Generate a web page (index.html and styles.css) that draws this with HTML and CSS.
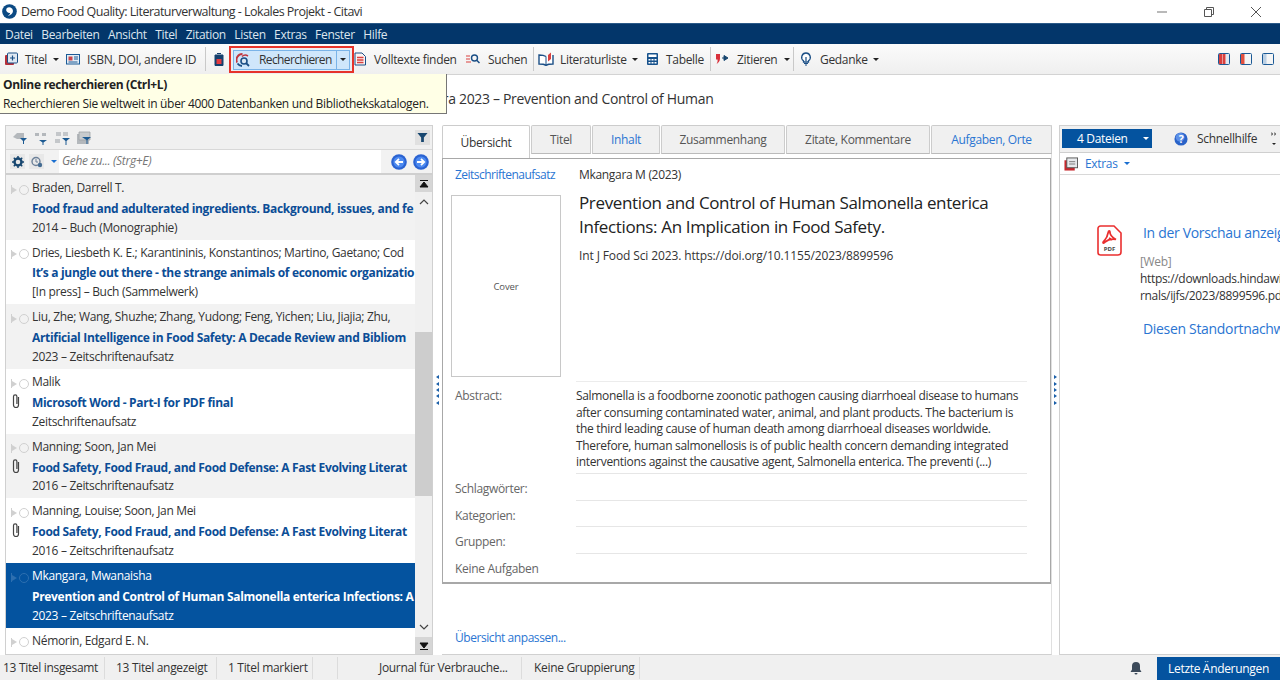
FILE: index.html
```html
<!DOCTYPE html>
<html lang="de">
<head>
<meta charset="utf-8">
<title>Demo Food Quality: Literaturverwaltung - Lokales Projekt - Citavi</title>
<link rel="stylesheet" href="styles.css">
</head>
<body>
<div class="app">
  <header class="titlebar">
    <svg class="logo" viewBox="0 0 16 16"><circle cx="8" cy="8" r="7.800" fill="#0b4a84"/><path d="M4.800 4.800a3.900 3.900 0 0 1 6.900 2.400c0 2.900-2.700 5-5.600 5.600 1.500-1.100 2.500-2.200 2.600-3.500a3.200 3.200 0 0 1-3.900-4.500z" fill="#fff"/></svg>
    <span class="app-title">Demo Food Quality: Literaturverwaltung - Lokales Projekt - Citavi</span>
    <div class="winbtns">
      <svg viewBox="0 0 12 12"><path d="M1 6h10" stroke="#8a8a8a" stroke-width="1.200"/></svg>
      <svg viewBox="0 0 12 12"><path d="M1.500 3.500h7v7h-7zM3.500 3.500v-2h7v7h-2" fill="none" stroke="#555" stroke-width="1"/></svg>
      <svg viewBox="0 0 12 12"><path d="M1 1l10 10M11 1L1 11" stroke="#555" stroke-width="1"/></svg>
    </div>
  </header>
  <nav class="menubar">
    <span>Datei</span><span>Bearbeiten</span><span>Ansicht</span><span>Titel</span><span>Zitation</span><span>Listen</span><span>Extras</span><span>Fenster</span><span>Hilfe</span>
  </nav>
  <div class="toolbar">
    <div class="tool t1">
      <svg class="ic" viewBox="0 0 14 14"><rect x="1" y="3" width="9" height="10" rx="1" fill="#b5303a"/><rect x="3.500" y="1" width="10" height="10" rx="1" fill="#dfe8f2" stroke="#1b4f86"/><path d="M8.500 3.500v5M6 6h5" stroke="#1b4f86" stroke-width="1.200"/></svg>
      <span>Titel</span><i class="caret"></i>
    </div>
    <div class="tool t2">
      <svg class="ic" viewBox="0 0 14 14"><rect x=".5" y="2.500" width="13" height="9.500" fill="#e3ecf5" stroke="#1b5a96"/><rect x="2.500" y="4.500" width="4" height="4" fill="#c9444a"/><path d="M8 5h4M8 7h4M2.500 10h9" stroke="#1b5a96"/></svg>
      <span>ISBN, DOI, andere ID</span>
    </div>
    <i class="sep"></i>
    <div class="tool t3">
      <svg class="ic-s" viewBox="0 0 10 14"><path d="M3 1.500h4M1 3h8v10.500H1z" fill="#16406e" stroke="#16406e"/><rect x="2.500" y="7" width="5" height="5" fill="#e53a3f"/></svg>
    </div>
    <div class="highlight">
      <div class="split">
        <svg class="ic" viewBox="0 0 14 14"><path d="M6.500 1A6 6 0 0 0 1 9.500" fill="none" stroke="#c0353d" stroke-width="2"/><path d="M1.500 10.500A6 6 0 0 0 6 13" fill="none" stroke="#1b4f86" stroke-width="1.800"/><path d="M6 3.500a5 5 0 0 1 6-.5" fill="none" stroke="#c0353d" stroke-width="1.500"/><circle cx="8" cy="8" r="3" fill="#dbe7f2" stroke="#1b4f86" stroke-width="1.600"/><path d="M10 10l3 3" stroke="#1b4f86" stroke-width="1.800"/></svg>
        <span class="split-label">Recherchieren</span>
        <span class="split-drop"><i class="caret"></i></span>
      </div>
    </div>
    <div class="tool t4">
      <svg class="ic" viewBox="0 0 14 14"><path d="M1 1h7l3.500 3.500V13H1z" fill="#fdf3f2" stroke="#1b4f86"/><path d="M3 5.500h6.500M3 8h6.500M3 10.500h6.500" stroke="#d9403f" stroke-width="1.300"/></svg>
      <span>Volltexte finden</span>
    </div>
    <div class="tool t5">
      <svg class="ic" viewBox="0 0 14 14"><path d="M0 4h4M0 7h4M0 10h5" stroke="#d9403f" stroke-width="1.200"/><circle cx="8.500" cy="6" r="3" fill="none" stroke="#1b4f86" stroke-width="1.400"/><path d="M10.500 8l3 3" stroke="#1b4f86" stroke-width="1.500"/></svg>
      <span>Suchen</span>
    </div>
    <i class="sep"></i>
    <div class="tool t6">
      <svg class="ic-w" viewBox="0 0 16 14"><path d="M8 4.500C6.500 3.500 3.500 3 1 3v9c2.500 0 5.500.3 7 1.300 1.500-1 4.500-1.300 7-1.300V3" fill="#fff" stroke="#1b4f86" stroke-width="1.400"/><path d="M8 4.500v8.500" stroke="#1b4f86"/><path d="M10 9.500V3l3-2.500V7z" fill="#d9403f"/></svg>
      <span>Literaturliste</span><i class="caret"></i>
    </div>
    <div class="tool t7">
      <svg class="ic" viewBox="0 0 14 14"><rect x="1" y="1" width="11" height="12" rx="1" fill="#17528c"/><rect x="2.500" y="2.500" width="8" height="2.500" fill="#fff"/><path d="M2.500 7h2v1.500h-2zM5.500 7h2v1.500h-2zM8.500 7h2v1.500h-2zM2.500 10h2v1.500h-2zM5.500 10h2v1.500h-2zM8.500 10h2v1.500h-2z" fill="#fff"/></svg>
      <span>Tabelle</span>
    </div>
    <i class="sep"></i>
    <div class="tool t8">
      <svg class="ic" viewBox="0 0 14 14"><path d="M1 2h4v4.500c0 2.500-1.500 4.500-3.500 5.500 1-1.500 1.300-3 1-4.500H1z" fill="#d9303a"/><path d="M7 6h3M9 3.500L13 6l-4 2.500z" fill="#17466f" stroke="#17466f"/></svg>
      <span>Zitieren</span><i class="caret"></i>
    </div>
    <i class="sep"></i>
    <div class="tool t9">
      <svg class="ic" viewBox="0 0 14 14"><path d="M6 1a4.300 4.300 0 0 0-2.500 7.800V10h5V8.800A4.300 4.300 0 0 0 6 1z" fill="#fff" stroke="#1b4f86" stroke-width="1.300"/><path d="M6 5v4M4 11.500h4M5 13h2" stroke="#1b4f86" stroke-width="1.200"/></svg>
      <span>Gedanke</span><i class="caret"></i>
    </div>
    <div class="layout-btns">
      <svg viewBox="0 0 12 12"><rect x="1" y="1" width="3" height="10" fill="#d9403f"/><rect x="4.500" y="1" width="3" height="10" fill="#d9403f"/><rect x="8" y="1" width="3" height="10" fill="#dfe8f2"/><rect x=".5" y=".5" width="11" height="11" rx="1" fill="none" stroke="#1b5a96"/></svg>
      <svg viewBox="0 0 12 12"><rect x="1" y="1" width="3.500" height="10" fill="#e2503f"/><rect x=".5" y=".5" width="11" height="11" rx="1" fill="none" stroke="#1b5a96"/></svg>
      <svg viewBox="0 0 12 12"><rect x="1" y="1" width="3.500" height="10" fill="#bcd0e4"/><rect x=".5" y=".5" width="11" height="11" rx="1" fill="none" stroke="#1b5a96"/></svg>
    </div>
  </div>
  <div class="tooltip">
    <strong>Online recherchieren (Ctrl+L)</strong>
    <span>Recherchieren Sie weltweit in über 4000 Datenbanken und Bibliothekskatalogen.</span>
  </div>
  <div class="doc-heading">Mkangara 2023 – Prevention and Control of Human</div>
  <main class="panes">
    <section class="left">
      <div class="left-tools">
        <svg viewBox="0 0 16 14"><path d="M1 6l4-4h7v6H5z" fill="#b4b8bc"/><path d="M8 7h7l-3 3v3h-1v-3z" fill="#1c5a92"/></svg>
        <svg viewBox="0 0 16 14"><path d="M2 2h4v3H2zM9 2h4v3H9z" fill="#b4b8bc"/><path d="M6 9h8l-3.500 2.500V14h-1v-2.500z" fill="#1c5a92"/></svg>
        <svg viewBox="0 0 16 14"><path d="M1 8h5v4H1zM2 1h5v4H2zM9 1h5v4H9z" fill="#c4c7ca"/><path d="M8 7h8l-3.500 3v4h-1v-4z" fill="#1c5a92"/></svg>
        <svg viewBox="0 0 16 14"><path d="M2 3h12v10H2z" fill="#b4b8bc"/><path d="M4 1h11v8H4z" fill="#c8cbce" stroke="#9ea2a6" stroke-width=".8"/><path d="M7 6h9l-3.500 3v4h-1V9z" fill="#1c5a92"/></svg>
        <span class="filter-btn"><svg viewBox="0 0 12 12"><path d="M.5 1h11L7.500 6v5h-3V6z" fill="#17466f"/></svg></span>
      </div>
      <div class="left-search">
        <span class="mini-btn"><svg viewBox="0 0 12 12"><circle cx="6" cy="6" r="3.500" fill="none" stroke="#17466f" stroke-width="2.400"/><path d="M6 0v2M6 10v2M0 6h2M10 6h2M1.800 1.800l1.400 1.400M8.800 8.800l1.400 1.400M10.200 1.800L8.800 3.200M3.200 8.800l-1.400 1.400" stroke="#17466f" stroke-width="1.500"/></svg></span>
        <span class="mini-btn"><svg viewBox="0 0 12 12"><circle cx="5" cy="5.500" r="4" fill="none" stroke="#6d8199" stroke-width="1.400"/><circle cx="9" cy="9" r="2.200" fill="#456c92"/><path d="M5 3v3h2" fill="none" stroke="#6d8199"/></svg></span>
        <i class="caret blue"></i>
        <span class="search-text">Gehe zu... (Strg+E)</span>
        <svg class="nav" viewBox="0 0 16 16"><circle cx="8" cy="8" r="7.800" fill="#2a63d2"/><circle cx="8" cy="8" r="5.600" fill="#4d8af0"/><path d="M12 8H5M8 4.800L4.800 8 8 11.200" fill="none" stroke="#fff" stroke-width="1.800"/></svg>
        <svg class="nav" viewBox="0 0 16 16"><circle cx="8" cy="8" r="7.800" fill="#2a63d2"/><circle cx="8" cy="8" r="5.600" fill="#4d8af0"/><path d="M4 8h7M8 4.800L11.200 8 8 11.200" fill="none" stroke="#fff" stroke-width="1.800"/></svg>
      </div>
      <div class="list-wrap">
        <ul class="list">
          <li class="row alt"><div class="marks"><i class="flag"></i></div><div class="lines"><p>Braden, Darrell T.</p><p class="t">Food fraud and adulterated ingredients. Background, issues, and fe</p><p>2014 – Buch (Monographie)</p></div></li>
          <li class="row"><div class="marks"><i class="flag"></i></div><div class="lines"><p>Dries, Liesbeth K. E.; Karantininis, Konstantinos; Martino, Gaetano; Cod</p><p class="t">It’s a jungle out there - the strange animals of economic organizatio</p><p>[In press] – Buch (Sammelwerk)</p></div></li>
          <li class="row alt"><div class="marks"><i class="flag"></i></div><div class="lines"><p>Liu, Zhe; Wang, Shuzhe; Zhang, Yudong; Feng, Yichen; Liu, Jiajia; Zhu,</p><p class="t">Artificial Intelligence in Food Safety: A Decade Review and Bibliom</p><p>2023 – Zeitschriftenaufsatz</p></div></li>
          <li class="row"><div class="marks"><i class="flag"></i><svg class="clip" viewBox="0 0 10 16"><path d="M7.500 4v8a2.500 2.500 0 0 1-5 0V3.500a1.700 1.700 0 0 1 3.400 0V11" fill="none" stroke="#444" stroke-width="1.200"/></svg></div><div class="lines"><p>Malik</p><p class="t">Microsoft Word - Part-I for PDF final</p><p>Zeitschriftenaufsatz</p></div></li>
          <li class="row alt"><div class="marks"><i class="flag"></i><svg class="clip" viewBox="0 0 10 16"><path d="M7.500 4v8a2.500 2.500 0 0 1-5 0V3.500a1.700 1.700 0 0 1 3.400 0V11" fill="none" stroke="#444" stroke-width="1.200"/></svg></div><div class="lines"><p>Manning; Soon, Jan Mei</p><p class="t">Food Safety, Food Fraud, and Food Defense: A Fast Evolving Literat</p><p>2016 – Zeitschriftenaufsatz</p></div></li>
          <li class="row"><div class="marks"><i class="flag"></i><svg class="clip" viewBox="0 0 10 16"><path d="M7.500 4v8a2.500 2.500 0 0 1-5 0V3.500a1.700 1.700 0 0 1 3.400 0V11" fill="none" stroke="#444" stroke-width="1.200"/></svg></div><div class="lines"><p>Manning, Louise; Soon, Jan Mei</p><p class="t">Food Safety, Food Fraud, and Food Defense: A Fast Evolving Literat</p><p>2016 – Zeitschriftenaufsatz</p></div></li>
          <li class="row sel"><div class="marks"><i class="flag"></i></div><div class="lines"><p>Mkangara, Mwanaisha</p><p class="t">Prevention and Control of Human Salmonella enterica Infections: A</p><p>2023 – Zeitschriftenaufsatz</p></div></li>
          <li class="row"><div class="marks"><i class="flag"></i></div><div class="lines"><p>Némorin, Edgard E. N.</p></div></li>
        </ul>
        <div class="scroll">
          <span class="sb-end"><svg viewBox="0 0 10 8"><path d="M1 .5h8M5 2l4 5H1z" stroke="#111" fill="#111"/></svg></span>
          <svg class="sb-arrow" viewBox="0 0 10 6"><path d="M1 5l4-4 4 4" fill="none" stroke="#444" stroke-width="1.200"/></svg>
          <span class="sb-space top"></span>
          <span class="sb-thumb"></span>
          <span class="sb-space"></span>
          <svg class="sb-arrow" viewBox="0 0 10 6"><path d="M1 1l4 4 4-4" fill="none" stroke="#444" stroke-width="1.200"/></svg>
          <span class="sb-end"><svg viewBox="0 0 10 8"><path d="M1 7.500h8M5 6L9 1H1z" stroke="#111" fill="#111"/></svg></span>
        </div>
      </div>
    </section>
    <div class="splitter"><i></i><i></i><i></i><i></i><i></i></div>
    <section class="center">
      <div class="tabs">
        <span class="tab active w1">Übersicht</span>
        <span class="tab w2">Titel</span>
        <span class="tab link w3">Inhalt</span>
        <span class="tab w4">Zusammenhang</span>
        <span class="tab w5">Zitate, Kommentare</span>
        <span class="tab link w6">Aufgaben, Orte</span>
      </div>
      <div class="card">
        <div class="top-grid">
          <a class="type">Zeitschriftenaufsatz</a>
          <span class="author">Mkangara M (2023)</span>
          <div class="cover">Cover</div>
          <div class="ref">
            <h1>Prevention and Control of Human Salmonella enterica Infections: An Implication in Food Safety.</h1>
            <p>Int J Food Sci 2023. https://doi.org/10.1155/2023/8899596</p>
          </div>
        </div>
        <dl class="fields">
          <dt class="abs">Abstract:</dt>
          <dd class="abs">Salmonella is a foodborne zoonotic pathogen causing diarrhoeal disease to humans after consuming contaminated water, animal, and plant products. The bacterium is the third leading cause of human death among diarrhoeal diseases worldwide. Therefore, human salmonellosis is of public health concern demanding integrated interventions against the causative agent, Salmonella enterica. The preventi (...)</dd>
          <dt>Schlagwörter:</dt><dd></dd>
          <dt>Kategorien:</dt><dd></dd>
          <dt>Gruppen:</dt><dd></dd>
          <dt>Keine Aufgaben</dt><dd class="last"></dd>
        </dl>
      </div>
      <a class="customize">Übersicht anpassen...</a>
    </section>
    <div class="splitter right-s"><i></i><i></i><i></i><i></i><i></i></div>
    <aside class="right">
      <div class="right-tabs">
        <span class="files-btn">4 Dateien<i class="caret white"></i></span>
        <svg class="help" viewBox="0 0 16 16"><circle cx="8" cy="8" r="7.500" fill="#2a63c8"/><circle cx="7" cy="6" r="5" fill="#5c8fe8"/><text x="8" y="12" text-anchor="middle" class="help-q">?</text></svg>
        <span class="help-text">Schnellhilfe</span>
        <span class="more">
          <svg viewBox="0 0 6 4"><path d="M.5 0v4L2 2zM3.500 0v4L5 2z" fill="#333"/></svg>
          <i class="caret tiny"></i>
        </span>
      </div>
      <div class="extras">
        <svg class="ic-w" viewBox="0 0 16 15"><rect x="1" y="3.500" width="11" height="11" fill="#c8282d"/><rect x="3.500" y="1" width="11.500" height="10.500" fill="#e7e9ec" stroke="#555"/><path d="M6 5h6.500M6 7.500h6.500" stroke="#777"/></svg>
        <a>Extras</a><i class="caret blue"></i>
      </div>
      <div class="files">
        <svg class="pdf" viewBox="0 0 25 31"><path d="M3.500 1H17l7 7v19a3 3 0 0 1-3 3H3.500A2.500 2.500 0 0 1 1 27.500v-24A2.500 2.500 0 0 1 3.500 1z" fill="#fff" stroke="#ea2f2f" stroke-width="1.600"/><path d="M12 6c-1.500 0 0 4.500-4.500 9.500C5 18 6 18.800 8 17c3-2.500 7-3.500 11-2.500-3-1.500-6-3.500-6.200-8C12.700 6 12.300 6 12 6zM12 13l3.500 2" fill="none" stroke="#ea2f2f" stroke-width="1.800"/><text x="12.500" y="26" text-anchor="middle" class="pdf-t">PDF</text></svg>
        <div class="file-info">
          <a class="big first">In der Vorschau anzeigen</a>
          <span class="web">[Web]</span>
          <span class="url">https://downloads.hindawi.com/jou</span>
          <span class="url">rnals/ijfs/2023/8899596.pdf</span>
          <a class="big second">Diesen Standortnachweis</a>
        </div>
      </div>
    </aside>
  </main>
  <footer class="status">
    <span class="s s1">13 Titel insgesamt</span>
    <span class="s s2">13 Titel angezeigt</span>
    <span class="s s3">1 Titel markiert</span>
    <span class="s s4"></span>
    <span class="s s5">Journal für Verbrauche...</span>
    <span class="s s6">Keine Gruppierung</span>
    <svg class="bell" viewBox="0 0 14 14"><path d="M7 1a4 4 0 0 0-4 4v3.500L1.500 11h11L11 8.500V5a4 4 0 0 0-4-4zM5.500 12a1.500 1.500 0 0 0 3 0z" fill="#3c4a5a"/></svg>
    <span class="changes">Letzte Änderungen</span>
  </footer>
</div>
</body>
</html>
```
FILE: styles.css
```css
* { box-sizing: border-box; }
html, body { margin: 0; padding: 0; height: 100%; overflow: hidden; }
body { font-family: "Open Sans", "Noto Sans", sans-serif; font-size: 12px; color: #222; background: #fff; letter-spacing: -.32px; }
p, ul, dl, dd, dt, h1 { margin: 0; padding: 0; }
i { display: block; font-style: normal; }
.app { position: relative; width: 1280px; height: 680px; display: flex; flex-direction: column; overflow: hidden; }

.titlebar { height: 23px; display: flex; align-items: center; padding-left: 2px; background: #fff; flex: none; }
.logo { width: 15px; height: 15px; flex: none; }
.app-title { margin-left: 4px; font-size: 12.500px; color: #333; letter-spacing: -.52px; }
.winbtns { margin-left: auto; display: flex; gap: 35px; padding-right: 18px; }
.winbtns svg { width: 12px; height: 12px; }

.menubar { height: 21px; flex: none; background: #03366a; border-top: 1px solid #2b5a88; color: #dde6ef; display: flex; align-items: center; padding-left: 5px; gap: 8.400px; }

.toolbar { height: 31px; flex: none; display: flex; align-items: center; padding-left: 4px; background: linear-gradient(#fbfbfb, #efefef); border-bottom: 1px solid #d3d3d3; }
.tool { display: flex; align-items: center; gap: 8px; color: #333; flex: none; }
.ic { width: 14px; height: 14px; flex: none; }
.ic-s { width: 10px; height: 14px; flex: none; }
.ic-w { width: 16px; height: 14px; flex: none; }
.caret { width: 0; height: 0; border: 3px solid transparent; border-top: 3px solid #222; border-bottom: 0; margin-left: -1px; flex: none; }
.caret.blue { border-top-color: #1a6fd0; }
.caret.white { border-top-color: #fff; margin-left: 0; }
.caret.tiny { margin: 0; border-width: 2.500px; border-bottom: 0; }
.sep { width: 1px; height: 24px; background: #c9c9c9; flex: none; }
.t1 { width: 62px; gap: 7px; }
.t2 { width: 139px; gap: 7px; }
.t3 { width: 16px; margin-left: 8px; }
.highlight { width: 125px; height: 27px; border: 2px solid #e6332a; display: flex; align-items: center; justify-content: center; flex: none; margin-top: 2px; background: #eaeef2; align-self: flex-start; margin-left: -1px; }
.split { width: 117px; height: 20px; background: #cfe6fb; border: 1px solid #7ab3e8; display: flex; align-items: center; padding-left: 2px; color: #333; }
.split-label { margin-left: 9px; letter-spacing: -.62px; }
.split-drop { margin-left: auto; width: 13px; height: 18px; border-left: 1px solid #7ab3e8; display: flex; align-items: center; justify-content: center; }
.split-drop .caret { margin: 0; }
.t4 { width: 112px; gap: 6px; }
.t5 { width: 67px; gap: 8px; }
.t6 { width: 108px; margin-left: 4px; gap: 6px; }
.t7 { width: 64px; gap: 6px; }
.t8 { width: 78px; margin-left: 4px; gap: 8px; }
.t9 { width: 90px; margin-left: 6px; gap: 6px; }
.layout-btns { margin-left: auto; display: flex; gap: 10px; padding-right: 6px; }
.layout-btns svg { width: 12px; height: 12px; }

.tooltip { position: absolute; left: 0; top: 74px; width: 447px; height: 40px; background: #ffffe6; border-right: 1px solid #767676; border-bottom: 1px solid #767676; padding: 3px 3px; display: flex; flex-direction: column; gap: 3px; color: #222; line-height: 16px; z-index: 5; }
.tooltip strong { font-weight: 700; letter-spacing: -.35px; }

.doc-heading { height: 50px; flex: none; padding: 14px 0 0 393px; font-size: 14px; letter-spacing: -.32px; color: #333; line-height: 20px; white-space: nowrap; }

.panes { height: 530px; flex: none; display: flex; padding-left: 5px; }
.left { width: 428px; flex: none; border: 1px solid #d0d0d0; border-right-width: 1px; display: flex; flex-direction: column; }
.left-tools { height: 23px; flex: none; background: #f0f0f0; display: flex; align-items: center; padding-left: 6px; gap: 5px; }
.left-tools > svg { width: 16px; height: 14px; }
.filter-btn { margin-left: auto; margin-right: 2px; width: 15px; height: 15px; background: #e0e0e0; display: flex; align-items: center; justify-content: center; }
.filter-btn svg { width: 11px; height: 11px; }
.left-search { height: 26px; flex: none; display: flex; align-items: center; border-top: 1px solid #d8d8d8; border-bottom: 2px solid #cfcfcf; background: #f2f2f2; padding: 0 3px 0 4px; }
.mini-btn { width: 15px; height: 15px; background: #e8e8e8; display: flex; align-items: center; justify-content: center; margin-right: 4px; }
.mini-btn svg { width: 12px; height: 12px; }
.left-search .caret { margin: 0 2px 0 3px; }
.search-text { flex: 1; align-self: stretch; background: #fff; padding-left: 3px; font-style: italic; color: #777; line-height: 22px; margin-right: 4px; }
.nav { width: 16px; height: 16px; margin-left: 6px; flex: none; }
.list-wrap { flex: 1; min-height: 0; display: flex; }
.list { list-style: none; flex: 1; min-width: 0; overflow: hidden; }
.row { height: 64.700px; display: flex; background: #fff; color: #333; overflow: hidden; }
.row.alt { background: #f2f2f2; }
.row.sel { background: #04539f; color: #fff; }
.marks { width: 26px; flex: none; padding: 10px 0 0 5px; display: flex; flex-direction: column; align-items: flex-start; }
.flag { height: 9px; flex: none; display: flex; align-items: center; border-left: 1.500px solid #d0d0d0; }
.flag::before { content: ""; width: 0; height: 0; border-top: 3.500px solid transparent; border-bottom: 3.500px solid transparent; border-left: 5px solid #d0d0d0; }
.flag::after { content: ""; width: 8px; height: 8px; margin-left: 2px; border: 1.500px solid #d0d0d0; border-radius: 50%; }
.sel .flag { border-left-color: #2d6fb0; }
.sel .flag::before { border-left-color: #2d6fb0; }
.sel .flag::after { border-color: #2d6fb0; }
.clip { width: 10px; height: 16px; margin-top: 5px; flex: none; }
.lines { flex: 1; min-width: 0; padding-top: 3px; }
.lines p { height: 19.800px; line-height: 19.800px; white-space: nowrap; overflow: hidden; }
.lines p.t { font-weight: 700; color: #0b4d96; letter-spacing: -.32px; line-height: 21px; }
.sel .lines p.t { color: #fff; }
.scroll { width: 17px; flex: none; background: #f0f0f0; display: flex; flex-direction: column; align-items: center; }
.sb-end { width: 17px; height: 17px; background: #d6d6d6; display: flex; align-items: center; justify-content: center; flex: none; }
.sb-end svg { width: 10px; height: 8px; }
.sb-arrow { width: 10px; height: 6px; margin: 7px 0; flex: none; }
.sb-space { flex: 1; }
.sb-space.top { flex: 0 0 120px; }
.sb-thumb { width: 17px; height: 164px; background: #cdcdcd; flex: none; }

.splitter { width: 9px; flex: none; display: flex; flex-direction: column; align-items: center; justify-content: center; gap: 2.400px; }
.splitter i { width: 0; height: 0; border: 2.500px solid transparent; border-right: 3.500px solid #1a5ea8; border-left: 0; }
.right-s { width: 7px; }
.right-s i { border-left: 3.500px solid #1a5ea8; border-right: 0; }

.center { width: 610px; flex: none; display: flex; flex-direction: column; border-bottom: 1px solid #d0d0d0; border-right: 1px solid #e0e0e0; }
.tabs { height: 29px; display: flex; flex: none; gap: 1px; }
.tab { height: 29px; background: #f0f0f0; border: 1px solid #ccc; border-bottom: 1px solid #bbb; display: flex; align-items: center; justify-content: center; color: #555; border-radius: 2px 2px 0 0; flex: none; }
.tab.active { background: #fff; color: #333; border-bottom: 0; height: 33px; z-index: 1; }
.tab.link { color: #2a75d2; }
.w1 { width: 88px; } .w2 { width: 60px; } .w3 { width: 68px; } .w4 { width: 124px; } .w5 { width: 144px; } .w6 { width: 121px; }
.card { margin-top: 4px; height: 426px; border: 1px solid #a8a8a8; border-width: 1px 1px 2px 1px; display: flex; flex-direction: column; padding: 0 23px 0 8px; flex: none; }
.top-grid { display: grid; grid-template-columns: 128px 1fr; grid-template-rows: 36px 186px; }
.type { color: #2a75d2; padding: 7px 0 0 4px; line-height: 18px; letter-spacing: -.52px; }
.author { padding-top: 7px; line-height: 18px; color: #333; }
.cover { width: 110px; height: 182px; border: 1px solid #c8c8c8; display: flex; align-items: center; justify-content: center; font-size: 9.500px; color: #555; letter-spacing: -.1px; }
.ref h1 { font-weight: 400; font-size: 17px; line-height: 24px; color: #222; letter-spacing: -.36px; margin-top: -4px; width: 440px; }
.ref p { margin-top: 9px; line-height: 16px; color: #333; letter-spacing: -.12px; }
.fields { display: grid; grid-template-columns: 125px 1fr; margin-top: 0; }
.fields dt { padding: 2px 0 0 4px; color: #666; line-height: 26.700px; height: 26.700px; }
.fields dd { border-bottom: 1px solid #e6e6e6; height: 26.700px; }
.fields dt.abs { height: 93px; line-height: 16.600px; padding-top: 7px; }
.fields dd.abs { height: 93px; line-height: 16.600px; padding-top: 6px; color: #333; border-top: 1px solid #ececec; }
.fields dd.last { border-bottom: 0; }
.customize { color: #2a75d2; padding: 45px 0 0 13px; line-height: 18px; letter-spacing: -.44px; }

.right { flex: 1; min-width: 0; border: 1px solid #d0d0d0; border-right: 0; display: flex; flex-direction: column; overflow: hidden; }
.right-tabs { height: 27px; flex: none; background: #f0f0f0; display: flex; align-items: center; padding: 0 0 1px 2px; border-bottom: 1px solid #cfcfcf; }
.files-btn { width: 90px; height: 19px; background: #04539f; color: #fff; display: flex; align-items: center; justify-content: space-between; padding: 0 3px 0 15px; }
.help { width: 14px; height: 14px; margin-left: 22px; flex: none; }
.help-q { font-size: 12px; font-weight: 700; fill: #fff; }
.help-text { margin-left: 9px; color: #333; white-space: nowrap; }
.more { margin-left: 14px; display: flex; flex-direction: column; gap: 7px; align-items: center; }
.more svg { width: 6px; height: 4px; }
.extras { height: 22px; flex: none; display: flex; align-items: center; padding-left: 3px; gap: 6px; border-bottom: 1px solid #d8d8d8; color: #2a75d2; }
.extras .caret { margin-left: 0; }
.files { display: flex; padding: 50px 0 0 37px; }
.pdf { width: 25px; height: 31px; flex: none; }
.pdf-t { font-size: 6px; font-weight: 700; fill: #444; letter-spacing: 0; }
.file-info { margin-left: 18px; margin-top: -2px; display: flex; flex-direction: column; white-space: nowrap; }
.big { font-size: 14px; color: #2a75d2; line-height: 20px; margin-left: 3px; letter-spacing: -.32px; }
.web { color: #888; line-height: 17px; margin-top: 10px; }
.url { color: #333; line-height: 17px; }
.big.second { margin-top: 15px; }

.status { flex: 1; min-height: 0; display: flex; align-items: center; background: #f0f0f0; color: #333; }
.s { height: 22px; line-height: 22px; border-right: 1px solid #dcdcdc; flex: none; white-space: nowrap; }
.s1 { width: 105px; padding-left: 3px; }
.s2 { width: 112px; padding-left: 11px; }
.s3 { width: 96px; padding-left: 11px; }
.s4 { width: 25px; }
.s5 { width: 184px; padding-left: 41px; }
.s6 { width: 118px; padding-left: 12px; }
.bell { width: 14px; height: 14px; margin-left: auto; flex: none; }
.changes { width: 123px; height: 23px; margin-left: 14px; margin-top: 2px; background: #04539f; color: #fff; display: flex; align-items: center; justify-content: center; flex: none; }
```
